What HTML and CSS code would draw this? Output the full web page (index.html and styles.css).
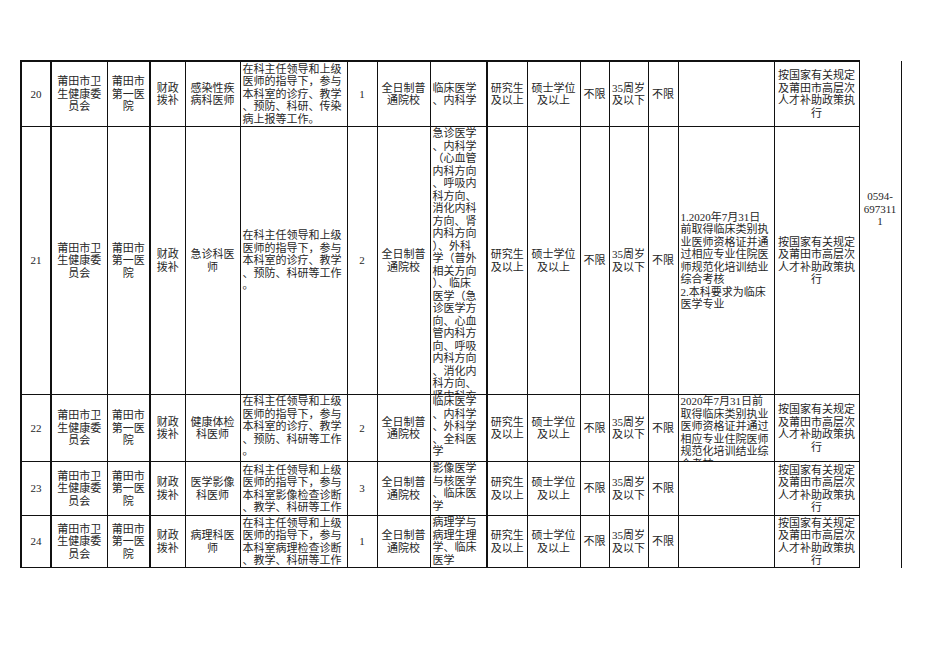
FILE: index.html
```html
<!DOCTYPE html>
<html lang="zh">
<head>
<meta charset="utf-8">
<title>招聘岗位表</title>
<link rel="stylesheet" href="styles.css">
</head>
<body>
<table class="sheet">
<colgroup>
<col class="k1"><col class="k2"><col class="k3"><col class="k4"><col class="k5"><col class="k6"><col class="k7"><col class="k8"><col class="k9"><col class="k10"><col class="k11"><col class="k12"><col class="k13"><col class="k14"><col class="k15"><col class="k16"><col class="k17">
</colgroup>
<tbody>
<tr class="r1">
<td class="tk"><div class="c">20</div></td>
<td class="tk"><div class="c">莆田市卫<br>生健康委<br>员会</div></td>
<td><div class="c">莆田市<br>第一医<br>院</div></td>
<td class="tk"><div class="c">财政<br>拨补</div></td>
<td><div class="c">感染性疾<br>病科医师</div></td>
<td><div class="c l">在科主任领导和上级<br>医师的指导下，参与<br>本科室的诊疗、教学<br>、预防、科研、传染<br>病上报等工作。</div></td>
<td><div class="c">1</div></td>
<td><div class="c">全日制普<br>通院校</div></td>
<td><div class="c l">临床医学<br>、内科学</div></td>
<td class="tk"><div class="c">研究生<br>及以上</div></td>
<td><div class="c">硕士学位<br>及以上</div></td>
<td><div class="c">不限</div></td>
<td><div class="c">35周岁<br>及以下</div></td>
<td><div class="c">不限</div></td>
<td><div class="c l"></div></td>
<td><div class="c">按国家有关规定<br>及莆田市高层次<br>人才补助政策执<br>行</div></td>
<td class="phone" rowspan="5"><div class="ph">0594-<br>697311<br>1</div></td>
</tr>
<tr class="r2">
<td class="tk"><div class="c">21</div></td>
<td class="tk"><div class="c">莆田市卫<br>生健康委<br>员会</div></td>
<td><div class="c">莆田市<br>第一医<br>院</div></td>
<td class="tk"><div class="c">财政<br>拨补</div></td>
<td><div class="c">急诊科医<br>师</div></td>
<td><div class="c l">在科主任领导和上级<br>医师的指导下，参与<br>本科室的诊疗、教学<br>、预防、科研等工作<br>。</div></td>
<td><div class="c">2</div></td>
<td><div class="c">全日制普<br>通院校</div></td>
<td><div class="c l t">急诊医学<br>、内科学<br>（心血管<br>内科方向<br>、呼吸内<br>科方向、<br>消化内科<br>方向、肾<br>内科方向<br>）、外科<br>学（普外<br>相关方向<br>）、临床<br>医学（急<br>诊医学方<br>向、心血<br>管内科方<br>向、呼吸<br>内科方向<br>、消化内<br>科方向、<br>肾内科方</div></td>
<td class="tk"><div class="c">研究生<br>及以上</div></td>
<td><div class="c">硕士学位<br>及以上</div></td>
<td><div class="c">不限</div></td>
<td><div class="c">35周岁<br>及以下</div></td>
<td><div class="c">不限</div></td>
<td><div class="c l">1.2020年7月31日<br>前取得临床类别执<br>业医师资格证并通<br>过相应专业住院医<br>师规范化培训结业<br>综合考核<br>2.本科要求为临床<br>医学专业</div></td>
<td><div class="c">按国家有关规定<br>及莆田市高层次<br>人才补助政策执<br>行</div></td>
</tr>
<tr class="r3">
<td class="tk"><div class="c">22</div></td>
<td class="tk"><div class="c">莆田市卫<br>生健康委<br>员会</div></td>
<td><div class="c">莆田市<br>第一医<br>院</div></td>
<td class="tk"><div class="c">财政<br>拨补</div></td>
<td><div class="c">健康体检<br>科医师</div></td>
<td><div class="c l t">在科主任领导和上级<br>医师的指导下，参与<br>本科室的诊疗、教学<br>、预防、科研等工作<br>。</div></td>
<td><div class="c">2</div></td>
<td><div class="c">全日制普<br>通院校</div></td>
<td><div class="c l t">临床医学<br>、内科学<br>、外科学<br>、全科医<br>学</div></td>
<td class="tk"><div class="c">研究生<br>及以上</div></td>
<td><div class="c">硕士学位<br>及以上</div></td>
<td><div class="c">不限</div></td>
<td><div class="c">35周岁<br>及以下</div></td>
<td><div class="c">不限</div></td>
<td><div class="c l t">2020年7月31日前<br>取得临床类别执业<br>医师资格证并通过<br>相应专业住院医师<br>规范化培训结业综<br>合考核</div></td>
<td><div class="c">按国家有关规定<br>及莆田市高层次<br>人才补助政策执<br>行</div></td>
</tr>
<tr class="r4">
<td class="tk"><div class="c">23</div></td>
<td class="tk"><div class="c">莆田市卫<br>生健康委<br>员会</div></td>
<td><div class="c">莆田市<br>第一医<br>院</div></td>
<td class="tk"><div class="c">财政<br>拨补</div></td>
<td><div class="c">医学影像<br>科医师</div></td>
<td><div class="c l">在科主任领导和上级<br>医师的指导下，参与<br>本科室影像检查诊断<br>、教学、科研等工作</div></td>
<td><div class="c">3</div></td>
<td><div class="c">全日制普<br>通院校</div></td>
<td><div class="c l t">影像医学<br>与核医学<br>、临床医<br>学</div></td>
<td class="tk"><div class="c">研究生<br>及以上</div></td>
<td><div class="c">硕士学位<br>及以上</div></td>
<td><div class="c">不限</div></td>
<td><div class="c">35周岁<br>及以下</div></td>
<td><div class="c">不限</div></td>
<td><div class="c l"></div></td>
<td><div class="c">按国家有关规定<br>及莆田市高层次<br>人才补助政策执<br>行</div></td>
</tr>
<tr class="r5">
<td class="tk"><div class="c">24</div></td>
<td class="tk"><div class="c">莆田市卫<br>生健康委<br>员会</div></td>
<td><div class="c">莆田市<br>第一医<br>院</div></td>
<td class="tk"><div class="c">财政<br>拨补</div></td>
<td><div class="c">病理科医<br>师</div></td>
<td><div class="c l">在科主任领导和上级<br>医师的指导下，参与<br>本科室病理检查诊断<br>、教学、科研等工作</div></td>
<td><div class="c">1</div></td>
<td><div class="c">全日制普<br>通院校</div></td>
<td><div class="c l t">病理学与<br>病理生理<br>学、临床<br>医学</div></td>
<td class="tk"><div class="c">研究生<br>及以上</div></td>
<td><div class="c">硕士学位<br>及以上</div></td>
<td><div class="c">不限</div></td>
<td><div class="c">35周岁<br>及以下</div></td>
<td><div class="c">不限</div></td>
<td><div class="c l"></div></td>
<td><div class="c">按国家有关规定<br>及莆田市高层次<br>人才补助政策执<br>行</div></td>
</tr>
</tbody>
</table>
</body>
</html>
```
FILE: styles.css
```css
html, body {
  margin: 0;
  padding: 0;
  background: #ffffff;
}
body {
  font-family: "Liberation Serif", "Noto Sans CJK SC", serif;
  font-size: 11px;
  line-height: 12.5px;
  color: #262626;
}
.sheet {
  margin: 60px 0 0 20px;
  border-collapse: collapse;
  table-layout: fixed;
  width: 880px;
}
.k1 { width: 30px; }
.k2 { width: 56px; }
.k3 { width: 43px; }
.k4 { width: 35px; }
.k5 { width: 55px; }
.k6 { width: 107px; }
.k7 { width: 30px; }
.k8 { width: 53px; }
.k9 { width: 57px; }
.k10 { width: 40px; }
.k11 { width: 53px; }
.k12 { width: 29px; }
.k13 { width: 39px; }
.k14 { width: 30px; }
.k15 { width: 96px; }
.k16 { width: 85px; }
.k17 { width: 42px; }
.sheet td {
  border: 1px solid #111;
  padding: 0;
  vertical-align: middle;
}
.sheet tr.r1 td {
  border-top: 2px solid #111;
}
.sheet td.tk {
  border-left: 2px solid #111;
}
.sheet td.phone {
  border-top: none;
  border-bottom: none;
  border-right: 1px solid #111;
  vertical-align: top;
}
.sheet tr.r1 td.phone {
  border-top: none;
}
.c {
  display: flex;
  flex-direction: column;
  justify-content: center;
  text-align: center;
  overflow: hidden;
  padding: 0 2px;
  white-space: nowrap;
}
.c.l {
  text-align: left;
}
.c.t {
  justify-content: flex-start;
}
.r1 .c { height: 64px; }
.r2 .c { height: 267px; }
.r3 .c { height: 66px; }
.r4 .c { height: 53px; }
.r5 .c { height: 51px; }
.ph {
  padding-top: 129px;
  text-align: center;
  white-space: nowrap;
}
```
